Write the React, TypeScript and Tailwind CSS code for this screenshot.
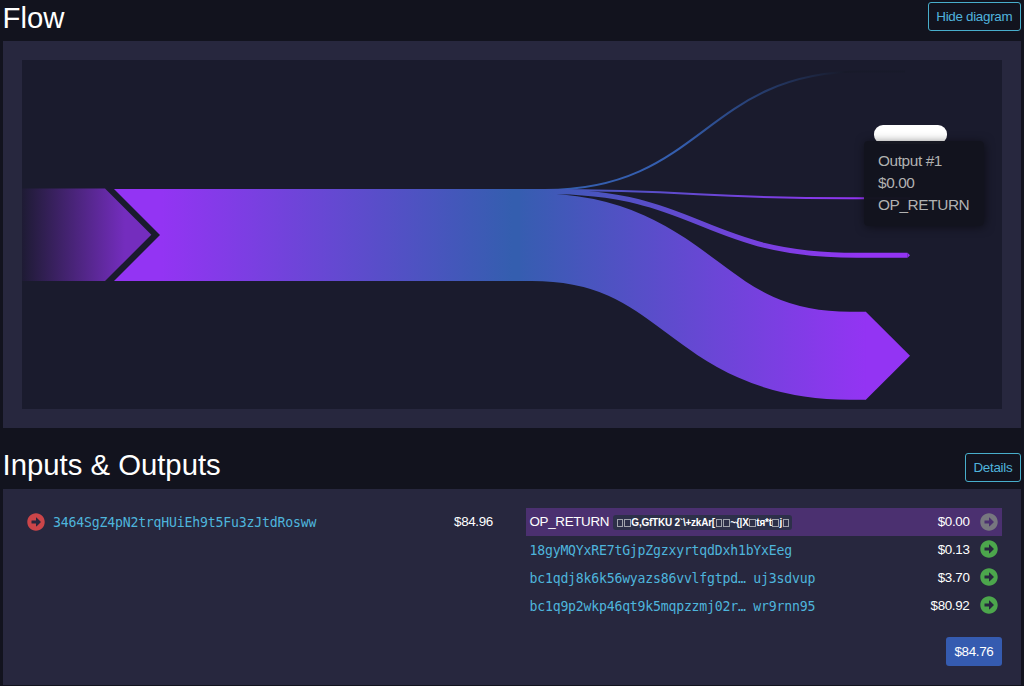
import React from 'react';
import { FaArrowAltCircleRight } from 'react-icons/fa';

const outputs = [
  { address: '18gyMQYxRE7tGjpZgzxyrtqdDxh1bYxEeg', amount: '$0.13' },
  { address: 'bc1qdj8k6k56wyazs86vvlfgtpd… uj3sdvup', amount: '$3.70' },
  { address: 'bc1q9p2wkp46qt9k5mqpzzmj02r… wr9rnn95', amount: '$80.92' },
];

function OutlineButton({ children }: { children: React.ReactNode }) {
  return (
    <button className="h-[29px] rounded-[3px] border border-[#48aecb] px-[7.7px] text-[13.4px] leading-[26px] tracking-[-0.3px] whitespace-nowrap text-[#50b4dd]">
      {children}
    </button>
  );
}

function Missing() {
  return <span className="mx-[0.7px] inline-block h-[8px] w-[6.3px] border border-[#a0a3ac]" />;
}

function FlowDiagram() {
  return (
    <svg className="block h-[349px] w-[980px]" viewBox="22 60 980 349" fill="none">
      <defs>
        <linearGradient id="connector" gradientUnits="userSpaceOnUse" x1="22" y1="0" x2="125" y2="0">
          <stop offset="0" stopColor="#1e1b34" />
          <stop offset="1" stopColor="#742dbe" />
        </linearGradient>
        <linearGradient id="input" gradientUnits="userSpaceOnUse" x1="162" y1="0" x2="512" y2="0">
          <stop offset="0" stopColor="#9334f3" />
          <stop offset="1" stopColor="#345eaf" />
        </linearGradient>
        <linearGradient id="output" gradientUnits="userSpaceOnUse" x1="512" y1="0" x2="865" y2="0">
          <stop offset="0" stopColor="#345eaf" />
          <stop offset="1" stopColor="#9334f3" />
        </linearGradient>
        <linearGradient id="fee" gradientUnits="userSpaceOnUse" x1="512" y1="0" x2="845" y2="0">
          <stop offset="0" stopColor="#345eaf" />
          <stop offset="0.5" stopColor="#345eaf" />
          <stop offset="1" stopColor="#181a2a" />
        </linearGradient>
      </defs>
      <path d="M22 188.5H105L151.3 234.8L105 281H22Z" fill="url(#connector)" />
      <path d="M114 189H524V281H114L160 235Z" fill="url(#input)" />
      <path d="M520 190H545C704 190 704 71.5 862 71.5H905" stroke="url(#fee)" strokeWidth="2" />
      <path d="M520 190H545C698 190 698 198.3 850 198.3H910" stroke="url(#output)" strokeWidth="2" />
      <path d="M520 191.5H545C701 191.5 701 255.3 857 255.3H907.5" stroke="url(#output)" strokeWidth="5" />
      <path d="M907.5 252.8L910 255.3L907.5 257.8Z" fill="#9334f3" />
      <path d="M520 237H532C691 237 691 355.7 850 355.7H866" stroke="url(#output)" strokeWidth="88" />
      <path d="M865.8 311.7L910 355.7L865.8 399.7Z" fill="#9334f3" />
    </svg>
  );
}

export default function App() {
  return (
    <div className="h-[686px] overflow-hidden bg-[#12131e] px-[3px] font-['Liberation_Sans',sans-serif] text-[13.4px] tracking-[-0.33px] text-white">
      <header className="flex h-[41px] items-start justify-between">
        <h2 className="ml-[-0.5px] text-[29.3px] leading-[35px] tracking-normal">Flow</h2>
        <div className="pt-[2px]">
          <OutlineButton>Hide diagram</OutlineButton>
        </div>
      </header>

      <section className="h-[387px] bg-[#27273e] px-[19px] pt-[19px]">
        <div className="relative h-[349px] w-[980px] bg-[#1a1b2d]">
          <FlowDiagram />
          <div className="absolute top-[65px] left-[851.5px] h-[19px] w-[73.5px] rounded-[9px] bg-white" />
          <div className="absolute top-[81px] left-[842px] h-[85px] w-[120px] rounded-[4px] bg-[#12131e]/98 px-[14px] pt-[9px] text-[15.4px] leading-[22px] tracking-[-0.4px] text-[#b1b1b1] shadow-[1px_1px_10px_rgba(0,0,0,0.5)]">
            <p>Output #1</p>
            <p>$0.00</p>
            <p>OP_RETURN</p>
          </div>
        </div>
      </section>

      <header className="flex h-[61px] items-start justify-between pt-[19px]">
        <h2 className="ml-[-0.5px] text-[29.3px] leading-[35px] tracking-normal">Inputs &amp; Outputs</h2>
        <div className="pt-[6px]">
          <OutlineButton>Details</OutlineButton>
        </div>
      </header>

      <section className="h-[196px] bg-[#27273e] px-[19px] pt-[19px]">
        <div className="flex justify-between">
          <div className="flex h-[28px] w-[476px] items-center pr-[5px] pl-[5px]">
            <FaArrowAltCircleRight className="mt-[-1px] size-[18px] text-[#cb4549]" />
            <span className="mt-[2px] ml-[8px] flex-1 font-['DejaVu_Sans_Mono',monospace] text-[13.2px] tracking-[-0.2px] text-[#4eb5dc]">
              3464SgZ4pN2trqHUiEh9t5Fu3zJtdRosww
            </span>
            <span className="mt-[1px]">$84.96</span>
          </div>

          <div className="w-[476px]">
            <div className="flex h-[28px] items-center bg-[#4b3070] pr-[4.5px] pl-[3.5px]">
              <span className="mt-[1px] w-[79px]">OP_RETURN</span>
              <span className="mt-[1px] ml-[4.5px] flex h-[15px] w-[179px] items-center rounded-[3px] bg-[#2d3049] pl-[3px] text-[10px] font-bold tracking-[-0.23px] whitespace-pre">
                <Missing /><Missing />G,GfTKU 2`\+zkAr[<Missing /><Missing />~{'{'}|X<Missing />tя*t<Missing />j<Missing />
              </span>
              <span className="mt-[1px] ml-auto">$0.00</span>
              <FaArrowAltCircleRight className="mt-[-1px] ml-[10px] size-[18px] text-[#77777f]" />
            </div>
            {outputs.map((o) => (
              <div key={o.address} className="flex h-[28px] items-center pr-[4.5px] pl-[3.5px]">
                <span className="mt-[1px] font-['DejaVu_Sans_Mono',monospace] text-[13.2px] tracking-[-0.22px] text-[#4eb5dc]">
                  {o.address}
                </span>
                <span className="mt-[1px] ml-auto">{o.amount}</span>
                <FaArrowAltCircleRight className="mt-[-2px] ml-[10px] size-[18px] text-[#4ca64c]" />
              </div>
            ))}
            <div className="mt-[17px] flex justify-end">
              <button className="h-[29px] w-[56px] rounded-[3px] bg-[#355bb0] pt-[1px] text-[13.4px] tracking-[-0.33px]">$84.76</button>
            </div>
          </div>
        </div>
      </section>
    </div>
  );
}
